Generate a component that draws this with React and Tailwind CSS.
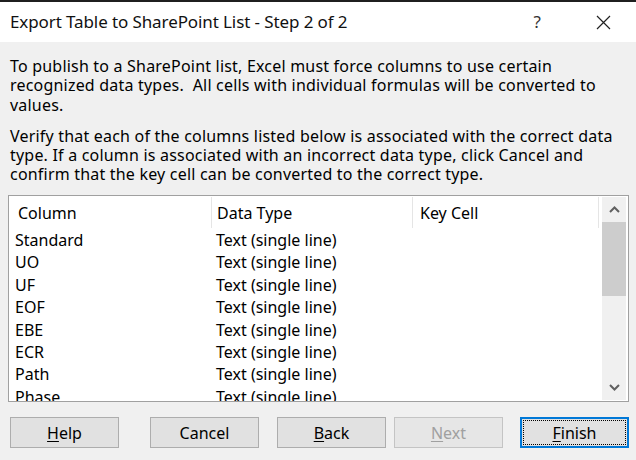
import React from "react";

const rows = ["Standard", "UO", "UF", "EOF", "EBE", "ECR", "Path", "Phase"];

function Btn({ u, rest, className = "", disabled, focus }) {
  return (
    <button
      className={
        "relative h-[31px] w-[109px] flex items-center justify-center text-[16px] pt-[2px] " +
        (focus
          ? "bg-[#e1e1e1] border-2 border-[#0078d7] "
          : disabled
          ? "bg-[#e6e6e6] border border-[#c4c4c4] text-[#a0a0a0] "
          : "bg-[#e1e1e1] border border-[#adadad] ") +
        className
      }
    >
      {focus && (
        <span className="absolute inset-[1px] border border-dotted border-[#000]" />
      )}
      <span>
        {u && <span className="underline underline-offset-2">{u}</span>}
        {rest}
      </span>
    </button>
  );
}

export default function App() {
  return (
    <div className="w-[636px] h-[460px] flex flex-col bg-[#f0f0f0] text-[#000] font-['Noto_Sans',sans-serif] overflow-hidden border-t-2 border-[#1f1f1f]">
      <div className="h-[40px] bg-white flex items-center shrink-0">
        <div className="ml-[10px] text-[17px] tracking-[-0.1px] text-[#111]">Export Table to SharePoint List - Step 2 of 2</div>
        <div className="ml-auto mr-[55px] text-[17px] text-[#333]">?</div>
        <svg width="15" height="15" viewBox="0 0 15 15" className="mr-[25px]">
          <path d="M1 1 L14 14 M14 1 L1 14" stroke="#222" strokeWidth="1.2" />
        </svg>
      </div>
      <div className="px-[10px] pt-[15px] text-[16px] leading-[19.3px] tracking-[0.2px] whitespace-nowrap">
        <p>
          To publish to a SharePoint list, Excel must force columns to use certain
          <br />
          recognized data types.&nbsp; All cells with individual formulas will be converted to
          <br />
          values.
        </p>
        <p className="mt-[12px]">
          Verify that each of the columns listed below is associated with the correct data
          <br />
          type. If a column is associated with an incorrect data type, click Cancel and
          <br />
          confirm that the key cell can be converted to the correct type.
        </p>
      </div>
      <div className="ml-[8px] mt-[10px] w-[621px] h-[207px] border border-[#a0a0a0] bg-white flex shrink-0 text-[16px]">
        <div className="flex-1 flex flex-col overflow-hidden">
          <div className="h-[33px] flex shrink-0">
            <div className="w-[203px] pl-[9px] pt-[2px] flex items-center border-r border-[#e5e5e5] my-[1px]">Column</div>
            <div className="w-[201px] pl-[5px] pt-[2px] flex items-center border-r border-[#e5e5e5] my-[1px]">Data Type</div>
            <div className="w-[186px] pl-[7px] pt-[2px] flex items-center border-r border-[#e5e5e5] my-[1px]">Key Cell</div>
          </div>
          {rows.map((r) => (
            <div key={r} className="h-[22.4px] flex items-center shrink-0">
              <div className="w-[203px] pl-[6px]">{r}</div>
              <div className="w-[201px] pl-[4px]">Text (single line)</div>
            </div>
          ))}
        </div>
        <div className="w-[24px] mr-[2px] my-[1px] bg-[#f0f0f0] flex flex-col shrink-0">
          <div className="h-[25px] flex items-center justify-center">
            <svg width="11" height="7" viewBox="0 0 11 7">
              <path d="M1 6 L5.5 1.5 L10 6" stroke="#606060" strokeWidth="2" fill="none" />
            </svg>
          </div>
          <div className="h-[74px] bg-[#cdcdcd]" />
          <div className="flex-1" />
          <div className="h-[25px] flex items-center justify-center">
            <svg width="11" height="7" viewBox="0 0 11 7">
              <path d="M1 1 L5.5 5.5 L10 1" stroke="#606060" strokeWidth="2" fill="none" />
            </svg>
          </div>
        </div>
      </div>
      <div className="flex mt-[15px]">
        <Btn u="H" rest="elp" className="ml-[10px]" />
        <Btn rest="Cancel" className="ml-[31px] w-[108px]" />
        <Btn u="B" rest="ack" className="ml-[18px]" />
        <Btn u="N" rest="ext" className="ml-[8px]" disabled />
        <Btn u="F" rest="inish" className="ml-[17px]" focus />
      </div>
    </div>
  );
}
